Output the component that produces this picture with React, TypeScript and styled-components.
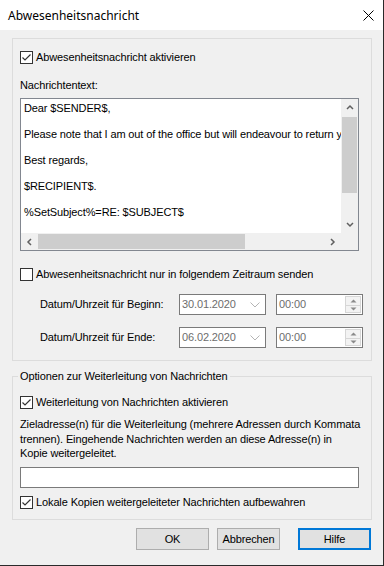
import React, { VFC } from 'react'
import styled, { createGlobalStyle } from 'styled-components'

const GlobalStyle = createGlobalStyle`
  html, body {
    margin: 0;
    padding: 0;
    background: #2a2a2a;
  }
  body {
    font-family: 'Liberation Sans', Arial, sans-serif;
    font-size: 11px;
    letter-spacing: -0.12px;
    color: #000;
  }
`
const StyledDialog = styled.div`
  width: 383px;
  height: 565px;
  background: #f0f0f0;
  display: flex;
  flex-direction: column;
`
const StyledTitleBar = styled.div`
  height: 30px;
  flex-shrink: 0;
  background: #fff;
  display: flex;
  align-items: center;
  justify-content: space-between;
  padding: 0 9px 0 8px;
  font-family: 'Noto Sans', 'Open Sans', sans-serif;
  font-size: 12px;
  letter-spacing: 0;
`
const StyledBody = styled.div`
  padding: 8px 0 0 12px;
  display: flex;
  flex-direction: column;
`
const StyledGroup = styled.div<{ mt?: number; pb?: number }>`
  position: relative;
  box-sizing: border-box;
  width: 360px;
  margin-top: ${props => props.mt || 0}px;
  border: 1px solid #dcdcdc;
  padding: 0 0 ${props => props.pb || 0}px 7px;
  display: flex;
  flex-direction: column;
`
const StyledGroupCaption = styled.span`
  position: absolute;
  top: -7px;
  left: 5px;
  padding: 0 2px;
  line-height: 13px;
  background: #f0f0f0;
`
const StyledCheckRow = styled.label<{ mt: number }>`
  display: flex;
  align-items: center;
  gap: 3px;
  height: 13px;
  margin-top: ${props => props.mt}px;
  line-height: 13px;
  white-space: nowrap;
`
const StyledCheckBox = styled.span`
  box-sizing: border-box;
  width: 13px;
  height: 13px;
  border: 1px solid #333;
  background: #fff;
  display: flex;
  align-items: center;
  justify-content: center;
`
const StyledLabel = styled.div<{ mt: number }>`
  margin-top: ${props => props.mt}px;
  line-height: 13px;
`
const StyledMemo = styled.div`
  box-sizing: border-box;
  margin-top: 6px;
  width: 339px;
  height: 153px;
  border: 1px solid #828790;
  background: #fff;
  display: grid;
  grid-template-columns: 1fr 17px;
  grid-template-rows: 1fr 17px;
`
const StyledMemoText = styled.div`
  overflow: hidden;
  white-space: pre;
  line-height: 13px;
  padding: 3px 0 0 3px;
`
const StyledVScroll = styled.div`
  background: #f0f0f0;
  display: grid;
  grid-template-rows: 17px 1fr 17px;
`
const StyledHScroll = styled.div`
  background: #f0f0f0;
  display: grid;
  grid-template-columns: 17px 1fr 17px;
`
const StyledArrow = styled.div`
  display: flex;
  align-items: center;
  justify-content: center;
`
const StyledTrack = styled.div<{ vertical?: boolean }>`
  display: flex;
  flex-direction: ${props => (props.vertical ? 'column' : 'row')};
  padding: ${props => (props.vertical ? '1px 1px 0 1px' : '1px 0 1px 0')};
`
const StyledThumb = styled.div`
  background: #cdcdcd;
`
const StyledCorner = styled.div`
  background: #f0f0f0;
`
const StyledDateRow = styled.div<{ mt: number }>`
  display: flex;
  align-items: center;
  margin-top: ${props => props.mt}px;
  padding-left: 20px;
  height: 21px;
`
const StyledDateLabel = styled.span`
  width: 139px;
  line-height: 13px;
`
const StyledField = styled.div<{ w: number; ml?: number }>`
  box-sizing: border-box;
  width: ${props => props.w}px;
  height: 21px;
  margin-left: ${props => props.ml || 0}px;
  border: 1px solid #7a7a7a;
  background: #fff;
  color: #6d6d6d;
  display: flex;
  align-items: center;
  padding-left: 2px;
  line-height: 13px;
`
const StyledFieldValue = styled.span`
  flex: 1;
`
const StyledDropChevron = styled.span`
  width: 12px;
  margin-right: 4px;
  display: flex;
  justify-content: center;
`
const StyledSpin = styled.div`
  box-sizing: border-box;
  width: 16px;
  height: 17px;
  margin-right: 1px;
  border: 1px solid #d6d6d6;
  display: grid;
  grid-template-rows: 1fr 1fr;
`
const StyledSpinHalf = styled.div<{ bottom?: boolean }>`
  display: flex;
  align-items: center;
  justify-content: center;
  background: #f3f3f3;
  border-top: ${props => (props.bottom ? '1px solid #d6d6d6' : 'none')};
`
const StyledParagraph = styled.p`
  margin: 8px 0 0 0;
  line-height: 14.7px;
  white-space: nowrap;
`
const StyledInput = styled.div`
  box-sizing: border-box;
  margin-top: 6px;
  width: 339px;
  height: 21px;
  border: 1px solid #7a7a7a;
  background: #fff;
`
const StyledButtonBar = styled.div`
  display: flex;
  margin-top: 8px;
  padding-left: 124px;
`
const StyledButton = styled.button<{ w: number; ml?: number; isDefault?: boolean }>`
  box-sizing: border-box;
  width: ${props => props.w}px;
  height: 22px;
  margin-left: ${props => props.ml || 0}px;
  padding: 0;
  font-family: 'Liberation Sans', Arial, sans-serif;
  font-size: 11px;
  letter-spacing: -0.12px;
  color: #000;
  background: #e1e1e1;
  border: ${props => (props.isDefault ? '2px solid #0078d7' : '1px solid #adadad')};
`

const Check: VFC<{ checked: boolean }> = ({ checked }) => (
  <StyledCheckBox>
    {checked && (
      <svg width="11" height="11" viewBox="0 0 11 11">
        <path d="M1.5 5.5 L4 8 L9.5 2.5" fill="none" stroke="#333" strokeWidth="1.2" />
      </svg>
    )}
  </StyledCheckBox>
)

const Chevron: VFC<{ dir: 'up' | 'down' | 'left' | 'right'; color?: string }> = ({
  dir,
  color = '#606060',
}) => {
  const d = {
    up: 'M1 5 L4 2 L7 5',
    down: 'M1 2 L4 5 L7 2',
    left: 'M5 1 L2 4 L5 7',
    right: 'M2 1 L5 4 L2 7',
  }[dir]
  return (
    <svg width="8" height="8" viewBox="0 0 8 8">
      <path d={d} fill="none" stroke={color} strokeWidth="1.5" />
    </svg>
  )
}

const Spinner = () => (
  <StyledSpin>
    <StyledSpinHalf>
      <svg width="7" height="4" viewBox="0 0 7 4">
        <path d="M0.5 3.5 L3.5 0.5 L6.5 3.5 Z" fill="#8a8a8a" />
      </svg>
    </StyledSpinHalf>
    <StyledSpinHalf bottom>
      <svg width="7" height="4" viewBox="0 0 7 4">
        <path d="M0.5 0.5 L3.5 3.5 L6.5 0.5 Z" fill="#8a8a8a" />
      </svg>
    </StyledSpinHalf>
  </StyledSpin>
)

const DateRow: VFC<{ label: string; date: string; mt: number }> = ({ label, date, mt }) => (
  <StyledDateRow mt={mt}>
    <StyledDateLabel>{label}</StyledDateLabel>
    <StyledField w={87}>
      <StyledFieldValue>{date}</StyledFieldValue>
      <StyledDropChevron>
        <svg width="10" height="6" viewBox="0 0 10 6">
          <path d="M0.5 0.5 L5 5 L9.5 0.5" fill="none" stroke="#b4b4b4" strokeWidth="1" />
        </svg>
      </StyledDropChevron>
    </StyledField>
    <StyledField w={87} ml={10}>
      <StyledFieldValue>00:00</StyledFieldValue>
      <Spinner />
    </StyledField>
  </StyledDateRow>
)

const message = [
  'Dear $SENDER$,',
  '',
  'Please note that I am out of the office but will endeavour to return your email as soon as possible.',
  '',
  'Best regards,',
  '',
  '$RECIPIENT$.',
  '',
  '%SetSubject%=RE: $SUBJECT$',
].join('\n')

const App = () => (
  <>
    <GlobalStyle />
    <StyledDialog>
      <StyledTitleBar>
        <span>Abwesenheitsnachricht</span>
        <svg width="11" height="11" viewBox="0 0 11 11">
          <path d="M0.5 0.5 L10.5 10.5 M10.5 0.5 L0.5 10.5" stroke="#000" strokeWidth="1" />
        </svg>
      </StyledTitleBar>
      <StyledBody>
        <StyledGroup pb={12}>
          <StyledCheckRow mt={12}>
            <Check checked />
            Abwesenheitsnachricht aktivieren
          </StyledCheckRow>
          <StyledLabel mt={15}>Nachrichtentext:</StyledLabel>
          <StyledMemo>
            <StyledMemoText>{message}</StyledMemoText>
            <StyledVScroll>
              <StyledArrow>
                <Chevron dir="up" />
              </StyledArrow>
              <StyledTrack vertical>
                <StyledThumb style={{ height: 76 }} />
              </StyledTrack>
              <StyledArrow>
                <Chevron dir="down" />
              </StyledArrow>
            </StyledVScroll>
            <StyledHScroll>
              <StyledArrow>
                <Chevron dir="left" />
              </StyledArrow>
              <StyledTrack>
                <StyledThumb style={{ width: 207 }} />
              </StyledTrack>
              <StyledArrow>
                <Chevron dir="right" />
              </StyledArrow>
            </StyledHScroll>
            <StyledCorner />
          </StyledMemo>
          <StyledCheckRow mt={17}>
            <Check checked={false} />
            Abwesenheitsnachricht nur in folgendem Zeitraum senden
          </StyledCheckRow>
          <DateRow mt={13} label="Datum/Uhrzeit für Beginn:" date="30.01.2020" />
          <DateRow mt={12} label="Datum/Uhrzeit für Ende:" date="06.02.2020" />
        </StyledGroup>
        <StyledGroup mt={15} pb={10}>
          <StyledGroupCaption>Optionen zur Weiterleitung von Nachrichten</StyledGroupCaption>
          <StyledCheckRow mt={19}>
            <Check checked />
            Weiterleitung von Nachrichten aktivieren
          </StyledCheckRow>
          <StyledParagraph>
            Zieladresse(n) für die Weiterleitung (mehrere Adressen durch Kommata
            <br />
            trennen). Eingehende Nachrichten werden an diese Adresse(n) in
            <br />
            Kopie weitergeleitet.
          </StyledParagraph>
          <StyledInput />
          <StyledCheckRow mt={8}>
            <Check checked />
            Lokale Kopien weitergeleiteter Nachrichten aufbewahren
          </StyledCheckRow>
        </StyledGroup>
        <StyledButtonBar>
          <StyledButton w={73}>OK</StyledButton>
          <StyledButton w={63} ml={8}>
            Abbrechen
          </StyledButton>
          <StyledButton w={73} ml={18} isDefault>
            Hilfe
          </StyledButton>
        </StyledButtonBar>
      </StyledBody>
    </StyledDialog>
  </>
)

export default App
